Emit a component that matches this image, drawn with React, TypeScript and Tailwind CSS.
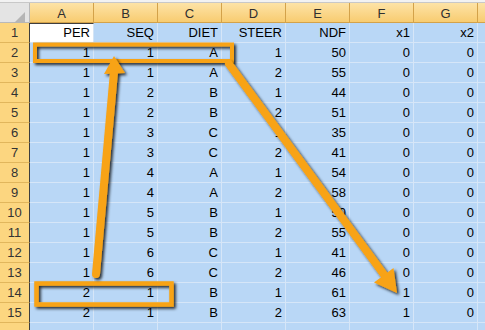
import React from "react";

const cols = ["A", "B", "C", "D", "E", "F", "G"];

const rows: string[][] = [
  ["PER", "SEQ", "DIET", "STEER", "NDF", "x1", "x2"],
  ["1", "1", "A", "1", "50", "0", "0"],
  ["1", "1", "A", "2", "55", "0", "0"],
  ["1", "2", "B", "1", "44", "0", "0"],
  ["1", "2", "B", "2", "51", "0", "0"],
  ["1", "3", "C", "1", "35", "0", "0"],
  ["1", "3", "C", "2", "41", "0", "0"],
  ["1", "4", "A", "1", "54", "0", "0"],
  ["1", "4", "A", "2", "58", "0", "0"],
  ["1", "5", "B", "1", "50", "0", "0"],
  ["1", "5", "B", "2", "55", "0", "0"],
  ["1", "6", "C", "1", "41", "0", "0"],
  ["1", "6", "C", "2", "46", "0", "0"],
  ["2", "1", "B", "1", "61", "1", "0"],
  ["2", "1", "B", "2", "63", "1", "0"],
  ["", "", "", "", "", "", ""],
];

const ORANGE = "#f8a316";

export default function App() {
  return (
    <div className="relative w-[485px] h-[330px] overflow-hidden bg-white text-[13px] font-['Liberation_Sans_Narrow','Liberation_Sans',Arial,sans-serif]">
      {/* formula bar edge */}
      <div className="h-[3px] bg-[#f2f2f2] border-b border-[#c8c8c8]" />

      <div className="grid grid-cols-[30px_repeat(7,64px)_1fr] auto-rows-[20px]">
        {/* corner */}
        <div className="relative bg-[#e4e4e4] border-r border-b border-[#b9b9b9]">
          <svg className="absolute left-[14px] top-[9px]" width="11" height="11" viewBox="0 0 11 11">
            <polygon points="11,0 11,11 0,11" fill="#b5b5b5" />
          </svg>
        </div>
        {cols.map((c) => (
          <div
            key={c}
            className="flex items-center justify-center pt-[2px] bg-gradient-to-b from-[#fde3a6] to-[#f8cc70] border-r border-b border-[#d3a24a] text-[#2f2f2f]"
          >
            {c}
          </div>
        ))}
        <div className="bg-gradient-to-b from-[#fde3a6] to-[#f8cc70] border-b border-[#d3a24a]" />

        {rows.map((r, i) => (
          <React.Fragment key={i}>
            <div className="flex items-center justify-center bg-[#fcd680] border-r border-r-[#3e3e3e] border-b border-b-[#e1b65c] text-[#333]">
              {i < 15 ? i + 1 : ""}
            </div>
            {r.map((v, j) => (
              <div
                key={j}
                className={
                  i === 0 && j === 0
                    ? "bg-white border-t border-t-[#3e3e3e] border-r border-b border-[#d4e4f5] pr-[3px] text-right leading-[18px] text-black"
                    : "bg-[#b9d7f6] border-r border-b border-[#d6e6f8] pr-[3px] text-right leading-[19px] text-black"
                }
              >
                {v}
              </div>
            ))}
            <div className="bg-[#b9d7f6] border-b border-[#d6e6f8]" />
          </React.Fragment>
        ))}
      </div>

      {/* annotations */}
      <svg className="absolute inset-0 pointer-events-none" width="485" height="330" viewBox="0 0 485 330">
        <defs>
          <filter id="sh" x="-20%" y="-20%" width="140%" height="140%">
            <feDropShadow dx="2" dy="2" stdDeviation="1.4" floodColor="#000" floodOpacity="0.8" />
          </filter>
        </defs>
        <g filter="url(#sh)">
          <rect x="35" y="44.5" width="197" height="16.5" fill="none" stroke={ORANGE} strokeWidth="4" />
          <rect x="36.5" y="283.5" width="135" height="21" fill="none" stroke={ORANGE} strokeWidth="4.5" />
        </g>
        <g filter="url(#sh)">
          <line x1="96" y1="274" x2="114" y2="72" stroke={ORANGE} strokeWidth="8" strokeLinecap="round" />
          <polygon points="114,56 104,74 125,73" fill={ORANGE} />
        </g>
        <g filter="url(#sh)">
          <line x1="229" y1="64" x2="385" y2="276" stroke={ORANGE} strokeWidth="8" strokeLinecap="round" />
          <polygon points="397,293 374,282.5 393.5,268" fill={ORANGE} />
        </g>
      </svg>
    </div>
  );
}
